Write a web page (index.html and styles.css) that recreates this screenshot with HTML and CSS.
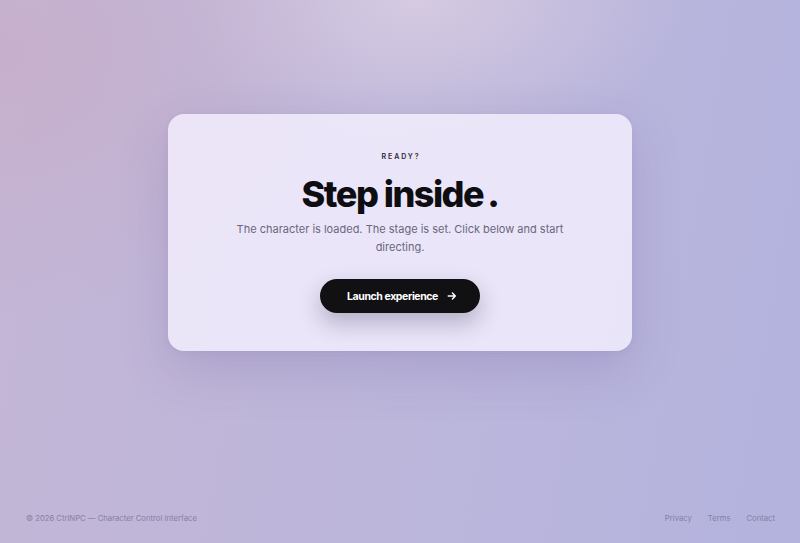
FILE: index.html
```html
<!DOCTYPE html>
<html lang="en">
<head>
<meta charset="utf-8">
<title>CtrlNPC</title>
<link rel="stylesheet" href="styles.css">
</head>
<body>
<div class="page">
  <main class="stage">
    <section class="card">
      <p class="eyebrow">READY?</p>
      <h1 class="title">Step inside<span class="dot">.</span></h1>
      <p class="lead">The character is loaded. The stage is set. Click below and start directing.</p>
      <button class="cta" type="button">Launch experience
        <svg class="arrow" viewBox="0 0 12 12" width="10" height="10" aria-hidden="true"><path d="M1.5 6h8.5M6.5 2.5L10 6l-3.5 3.5" fill="none" stroke="#fff" stroke-width="1.8" stroke-linecap="round" stroke-linejoin="round"/></svg>
      </button>
    </section>
  </main>
  <footer class="footer">
    <span class="copy">© 2026 CtrlNPC — Character Control Interface</span>
    <nav class="links">
      <a href="#">Privacy</a>
      <a href="#">Terms</a>
      <a href="#">Contact</a>
    </nav>
  </footer>
</div>
</body>
</html>
```
FILE: styles.css
```css
* { box-sizing: border-box; }
html, body { margin: 0; height: 100%; }
body {
  font-family: Inter, "Noto Sans", sans-serif;
  background:
    radial-gradient(ellipse 480px 360px at 0% 10%, rgba(198,174,202,0.9), rgba(198,174,202,0) 75%),
    radial-gradient(ellipse 360px 200px at 52% 0%, rgba(216,204,226,0.9), rgba(216,204,226,0) 75%),
    linear-gradient(100deg, #c4b6d6 0%, #bdb6da 45%, #b3b3de 100%);
  color: #111;
}
.page {
  height: 543px;
  display: flex;
  flex-direction: column;
}
.stage {
  flex: 1;
  display: flex;
  justify-content: center;
  align-items: flex-start;
  padding-top: 114px;
}
.card {
  width: 464px;
  height: 237px;
  background: rgba(240, 236, 252, 0.88);
  border-radius: 16px;
  box-shadow: 0 20px 50px rgba(90, 70, 140, 0.18), 0 2px 6px rgba(90, 70, 140, 0.06);
  display: flex;
  flex-direction: column;
  align-items: center;
  padding-top: 38px;
  text-align: center;
}
.eyebrow {
  margin: 0;
  font-size: 7px;
  font-weight: 600;
  letter-spacing: 1.9px;
  color: #2a2833;
  line-height: 10px;
  padding-left: 2px;
}
.title {
  margin: 10px 0 0;
  font-size: 36px;
  font-weight: 800;
  letter-spacing: -1.5px;
  line-height: 44px;
  color: #0e0e12;
}
.dot { margin-left: 4px; }
.lead {
  margin: 4px 0 0;
  max-width: 340px;
  font-size: 11px;
  line-height: 18px;
  color: #6a6780;
}
.cta {
  margin-top: 23px;
  width: 160px;
  height: 34px;
  border: none;
  border-radius: 17px;
  background: #111114;
  color: #fff;
  font-family: Inter, sans-serif;
  font-size: 10.5px;
  font-weight: 700;
  letter-spacing: -0.4px;
  display: flex;
  align-items: center;
  justify-content: center;
  gap: 9px;
  padding: 0 0 0 4px;
  box-shadow: 0 10px 22px rgba(40, 30, 80, 0.28);
}
.arrow { display: block; }
.footer {
  height: 42px;
  display: flex;
  justify-content: space-between;
  align-items: flex-start;
  padding: 13px 25px 0 26px;
  font-size: 7.7px;
  color: #8580a4;
}
.links { display: flex; gap: 16px; }
.links a { color: #8580a4; text-decoration: none; }
```
